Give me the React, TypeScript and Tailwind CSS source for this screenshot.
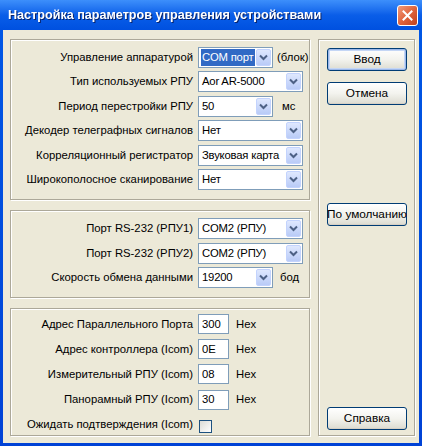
import React from 'react';

const font = { fontFamily: '"Liberation Sans", Arial, sans-serif' };

function Chevron() {
  return (
    <svg width="9" height="7" viewBox="0 0 9 7">
      <path d="M1 1.5 L4.5 5 L8 1.5" fill="none" stroke="#4d6185" strokeWidth="2" />
    </svg>
  );
}

function Combo({ value, width, selected = false }: { value: string; width: string; selected?: boolean }) {
  return (
    <div className={`${width} h-[21px] flex items-center border border-[#7f9db9] bg-white p-[1px]`}>
      <div className="flex-1 h-full flex items-center pl-[1px] min-w-0 tracking-[-0.2px]">
        <span
          className={
            selected
              ? 'bg-[#316ac5] text-white h-full flex items-center px-[1px] w-full whitespace-nowrap overflow-hidden'
              : 'px-[1px] whitespace-nowrap overflow-hidden'
          }
        >
          {value}
        </span>
      </div>
      <div className="w-[15px] h-full ml-[1px] rounded-[2px] border border-[#c3d3fd] bg-gradient-to-b from-[#dfe8fe] to-[#b9cbf7] flex items-center justify-center">
        <Chevron />
      </div>
    </div>
  );
}

function Field({ value }: { value: string }) {
  return (
    <div className="w-[31px] h-[20px] border border-[#7f9db9] bg-white flex items-center pl-[3px] leading-none">
      {value}
    </div>
  );
}

function Row({ label, children }: { label: string; children: React.ReactNode }) {
  return (
    <div className="flex items-center h-[21px]">
      <div className="w-[182px] text-right whitespace-nowrap">{label}</div>
      <div className="ml-[5px] flex items-center whitespace-nowrap">{children}</div>
    </div>
  );
}

function Panel({ className, children }: { className: string; children: React.ReactNode }) {
  return (
    <div className={`border border-[#aca899] shadow-[inset_1px_1px_0_#ffffff,1px_1px_0_#ffffff] ${className}`}>
      {children}
    </div>
  );
}

function Button({ label, isDefault = false, className = '' }: { label: string; isDefault?: boolean; className?: string }) {
  return (
    <div
      className={`w-[80px] h-[23px] rounded-[3px] border border-[#003c74] bg-gradient-to-b from-[#ffffff] via-[#f3f3ee] to-[#dcdbd0] flex items-center justify-center whitespace-nowrap text-[11.8px] ${
        isDefault ? 'shadow-[inset_0_0_0_1px_#9cb8ea,inset_0_0_0_2px_#c4d6f5]' : 'shadow-[inset_0_-1px_0_#d6d0c5]'
      } ${className}`}
    >
      {label}
    </div>
  );
}

export default function App() {
  return (
    <div
      className="w-[422px] h-[446px] flex flex-col bg-gradient-to-b from-[#0058e6] to-[#0042d6] text-[11.3px] text-black"
      style={font}
    >
      <div className="h-[30px] flex items-center justify-between pl-[8px] pr-[4px] bg-gradient-to-b from-[#3d8ffb] via-[#0a5ee8] to-[#0050e0]">
        <span className="text-white font-bold text-[12.6px] drop-shadow-[1px_1px_0_#0a246a]">
          Настройка параметров управления устройствами
        </span>
        <div className="w-[21px] h-[21px] rounded-[3px] border border-white bg-gradient-to-br from-[#f09a7a] via-[#e0643c] to-[#c0401c] flex items-center justify-center">
          <svg width="11" height="11" viewBox="0 0 11 11">
            <path d="M1.5 1.5 L9.5 9.5 M9.5 1.5 L1.5 9.5" stroke="#ffffff" strokeWidth="2" strokeLinecap="square" />
          </svg>
        </div>
      </div>

      <div className="mx-[3px] mb-[3px] flex-1 bg-[#ece9d8] flex pl-[7px] pt-[9px] gap-[8px]">
        <div className="w-[300px] flex flex-col gap-[10px]">
          <Panel className="h-[161px] pt-[7px] flex flex-col gap-[3.4px]">
            <Row label="Управление аппаратурой">
              <Combo value="COM порт" width="w-[75px]" selected />
              <span className="ml-[4px]">(блок)</span>
            </Row>
            <Row label="Тип используемых РПУ">
              <Combo value="Aor AR-5000" width="w-[105px]" />
            </Row>
            <Row label="Период перестройки РПУ">
              <Combo value="50" width="w-[75px]" />
              <span className="ml-[9px]">мс</span>
            </Row>
            <Row label="Декодер телеграфных сигналов">
              <Combo value="Нет" width="w-[105px]" />
            </Row>
            <Row label="Корреляционный регистратор">
              <Combo value="Звуковая карта" width="w-[105px]" />
            </Row>
            <Row label="Широкополосное сканирование">
              <Combo value="Нет" width="w-[105px]" />
            </Row>
          </Panel>

          <Panel className="h-[88px] pt-[7px] flex flex-col gap-[3.5px]">
            <Row label="Порт RS-232  (РПУ1)">
              <Combo value="COM2 (РПУ)" width="w-[105px]" />
            </Row>
            <Row label="Порт RS-232  (РПУ2)">
              <Combo value="COM2 (РПУ)" width="w-[105px]" />
            </Row>
            <Row label="Скорость обмена данными">
              <Combo value="19200" width="w-[75px]" />
              <span className="ml-[7px]">бод</span>
            </Row>
          </Panel>

          <Panel className="h-[128px] pt-[5px] flex flex-col gap-[4.5px]">
            <Row label="Адрес Параллельного Порта">
              <Field value="300" />
              <span className="ml-[7px]">Hex</span>
            </Row>
            <Row label="Адрес контроллера (Icom)">
              <Field value="0E" />
              <span className="ml-[7px]">Hex</span>
            </Row>
            <Row label="Измерительный РПУ (Icom)">
              <Field value="08" />
              <span className="ml-[7px]">Hex</span>
            </Row>
            <Row label="Панорамный РПУ (Icom)">
              <Field value="30" />
              <span className="ml-[7px]">Hex</span>
            </Row>
            <Row label="Ожидать подтверждения (Icom)">
              <div className="ml-[1px] mt-[3px] w-[13px] h-[13px] border border-[#1c5180] bg-gradient-to-br from-[#dcdcd6] to-[#ffffff]" />
            </Row>
          </Panel>
        </div>

        <Panel className="w-[97px] h-[397px] flex flex-col pl-[8px] pt-[8px]">
          <Button label="Ввод" isDefault />
          <Button label="Отмена" className="mt-[11px]" />
          <Button label="По умолчанию" className="mt-[98px]" />
          <div className="flex-1" />
          <Button label="Справка" className="mb-[5px]" />
        </Panel>
      </div>
    </div>
  );
}
